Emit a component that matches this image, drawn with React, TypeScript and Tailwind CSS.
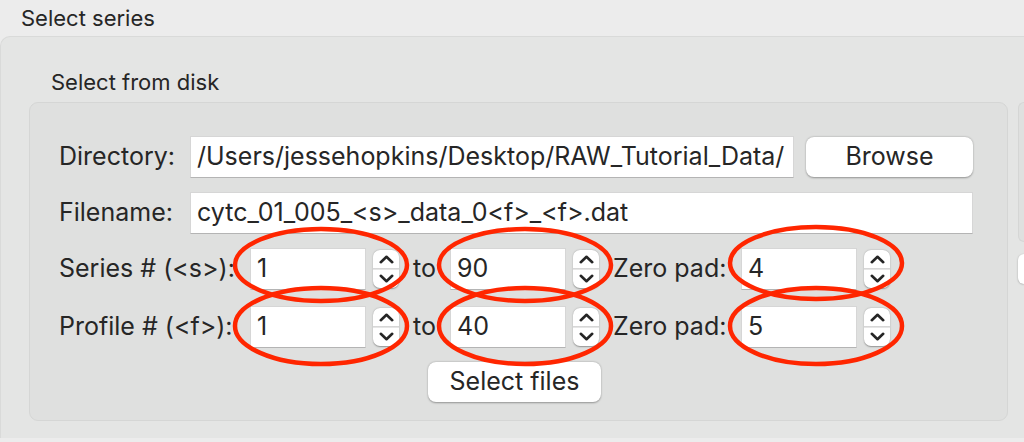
import React from "react";

const font = { fontFamily: "Inter, 'Liberation Sans', sans-serif" };

function Spinner() {
  return (
    <div className="w-[26px] h-[38px] rounded-[7px] bg-white shadow-[0_0.5px_1.5px_rgba(0,0,0,0.35)] flex flex-col overflow-hidden shrink-0">
      <div className="flex-1 flex items-center justify-center pt-[1px]">
        <svg width="15" height="9" viewBox="0 0 15 9">
          <path d="M1.8 7.2 L7.5 1.8 L13.2 7.2" fill="none" stroke="#262626" strokeWidth="2.6" strokeLinecap="round" strokeLinejoin="round" />
        </svg>
      </div>
      <div className="h-[2px] bg-gradient-to-b from-[#cfcfcf] to-[#ededed]" />
      <div className="flex-1 flex items-center justify-center pb-[1px]">
        <svg width="15" height="9" viewBox="0 0 15 9">
          <path d="M1.8 1.8 L7.5 7.2 L13.2 1.8" fill="none" stroke="#262626" strokeWidth="2.6" strokeLinecap="round" strokeLinejoin="round" />
        </svg>
      </div>
    </div>
  );
}

function NumField({ value }: { value: string }) {
  return (
    <div className="flex items-center gap-[7px] shrink-0">
      <div className="w-[116px] h-[42px] bg-white border-t border-l border-r border-[#d6d6d6] border-b-[1.5px] border-b-[#b4b4b4] flex items-center pl-[6px] text-[25px] text-[#262626]">
        {value}
      </div>
      <Spinner />
    </div>
  );
}

function TextField({ value, w }: { value: string; w: string }) {
  return (
    <div className={`${w} h-[42px] bg-white border-t border-l border-r border-[#d6d6d6] border-b-[1.5px] border-b-[#b4b4b4] flex items-center pl-[6px] text-[25px] text-[#262626] overflow-hidden whitespace-nowrap shrink-0`}>
      {value}
    </div>
  );
}

export default function App() {
  return (
    <div className="relative w-[1024px] h-[442px] overflow-hidden bg-[#ececec] text-[#262626]" style={font}>
      <div className="h-[36px] pl-[21px] flex items-center text-[22px]">Select series</div>
      <div className="h-[402px] rounded-tl-[10px] bg-[#e4e5e4] border-t border-l border-[#d9dad9] flex pl-[28px] gap-[10px]">
        <div className="w-[979px] shrink-0 flex flex-col">
          <div className="h-[65px] pl-[22px] flex items-center pt-[26px] text-[22px]">Select from disk</div>
          <div className="h-[319px] rounded-[9px] bg-[#dfe0df] border border-[#d5d6d5] pt-[33px] pl-[29px] flex flex-col text-[25px]">
            <div className="flex items-center h-[42px]">
              <div className="w-[131px] shrink-0">Directory:</div>
              <TextField value="/Users/jessehopkins/Desktop/RAW_Tutorial_Data/" w="w-[604px]" />
              <div className="ml-[12px] w-[167px] h-[40px] rounded-[8px] bg-white shadow-[0_0.5px_2px_rgba(0,0,0,0.35)] flex items-center justify-center">
                Browse
              </div>
            </div>
            <div className="flex items-center h-[42px] mt-[14px]">
              <div className="w-[131px] shrink-0">Filename:</div>
              <TextField value="cytc_01_005_<s>_data_0<f>_<f>.dat" w="w-[783px]" />
            </div>
            <div className="flex items-center h-[42px] mt-[14px]">
              <div className="w-[191px] shrink-0 whitespace-nowrap">Series # (&lt;s&gt;):</div>
              <NumField value="1" />
              <div className="w-[51px] pl-[14px] shrink-0">to</div>
              <NumField value="90" />
              <div className="w-[142px] pl-[14px] shrink-0 whitespace-nowrap">Zero pad:</div>
              <NumField value="4" />
            </div>
            <div className="flex items-center h-[42px] mt-[16px]">
              <div className="w-[191px] shrink-0 whitespace-nowrap">Profile # (&lt;f&gt;):</div>
              <NumField value="1" />
              <div className="w-[51px] pl-[14px] shrink-0">to</div>
              <NumField value="40" />
              <div className="w-[142px] pl-[14px] shrink-0 whitespace-nowrap">Zero pad:</div>
              <NumField value="5" />
            </div>
            <div className="mt-[14px] ml-[369px] w-[173px] h-[40px] rounded-[8px] bg-white shadow-[0_0.5px_2px_rgba(0,0,0,0.35)] flex items-center justify-center">
              Select files
            </div>
          </div>
        </div>
        <div className="flex-1 flex flex-col pt-[65px]">
          <div className="h-[140px] rounded-l-[9px] bg-[#dfe0df] border border-r-0 border-[#d5d6d5]" />
          <div className="mt-[12px] h-[30px] rounded-l-[7px] bg-white shadow-[0_0.5px_2px_rgba(0,0,0,0.3)]" />
        </div>
      </div>
      <svg className="absolute inset-0 pointer-events-none" width="1024" height="442">
        <g fill="none" stroke="#ff2600" strokeWidth="4.5">
          <ellipse cx="321" cy="265" rx="86" ry="36" />
          <ellipse cx="321" cy="326" rx="86" ry="38" />
          <ellipse cx="525" cy="265" rx="86" ry="36" />
          <ellipse cx="525" cy="326" rx="86" ry="38" />
          <ellipse cx="816" cy="263" rx="86" ry="36" />
          <ellipse cx="816" cy="326" rx="86" ry="38" />
        </g>
      </svg>
    </div>
  );
}
